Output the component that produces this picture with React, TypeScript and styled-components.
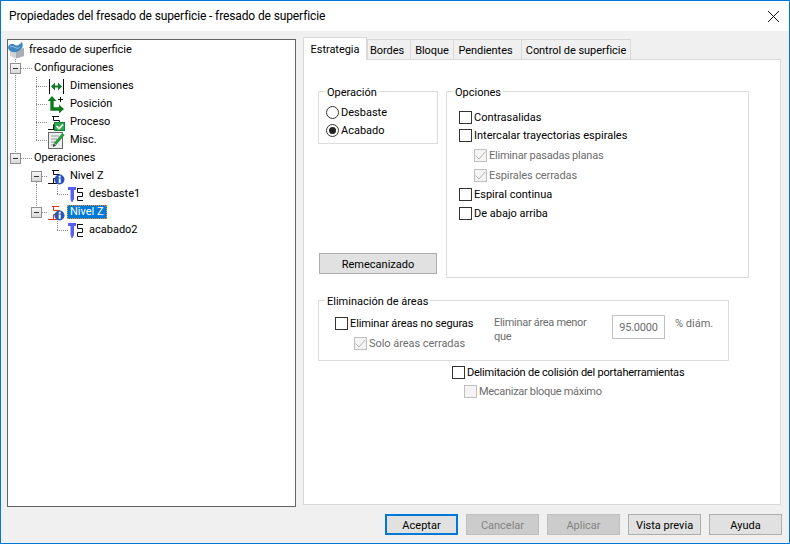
import React from "react";
import styled, { createGlobalStyle } from "styled-components";

const GlobalStyle = createGlobalStyle`
  html, body {
    margin: 0;
    padding: 0;
    background: #f0f0f0;
  }
  * {
    box-sizing: border-box;
  }
`;

const font = `Roboto, "Noto Sans", "Liberation Sans", sans-serif`;

/* ---------- icons ---------- */

function StepShape({ color }: { color: string }) {
  return (
    <path
      d="M4 2.5H11M5.5 2.5V6.5H11.5V10.5H5.5V15.5M0 15.5H9"
      fill="none"
      stroke={color}
      strokeWidth="1"
    />
  );
}

function RootIcon() {
  return (
    <svg width="17" height="17" viewBox="0 0 17 17">
      <path d="M2 6L10 4L16 6V14L8 16.5L2 14Z" fill="#cfd2d6" />
      <path d="M8 16.5V9L16 6V14Z" fill="#a9adb3" />
      <path
        d="M0 5C2 1 5 1 7 3C9 4.5 11 3 14 0C15 3 15 5 13 7C11 9.5 8 10.5 5 10C2 9.5 0 8 0 5Z"
        fill="#3f87bd"
      />
      <path d="M2 5C4 3.5 6 5 8 6C10 6.6 11 6 12 5" fill="none" stroke="#8cc0e4" />
    </svg>
  );
}

function DimensionsIcon() {
  return (
    <svg width="17" height="17" viewBox="0 0 17 17">
      <path d="M1.5 1V16M15.5 1V16" stroke="#111" strokeWidth="1" />
      <path d="M5 8.5H12" stroke="#137a2c" strokeWidth="2" />
      <path d="M3 8.5L7 4.5V12.5ZM14 8.5L10 4.5V12.5Z" fill="#137a2c" />
    </svg>
  );
}

function PositionIcon() {
  return (
    <svg width="17" height="17" viewBox="0 0 17 17">
      <path d="M4 3V13H12" fill="none" stroke="#0f7a1e" strokeWidth="3.4" />
      <path d="M4 0L8.5 5H-0.5ZM16 13L11 8.5V17.5Z" fill="#0f7a1e" />
      <path d="M10 3.5H15M12.5 1V6" stroke="#111" strokeWidth="1" />
    </svg>
  );
}

function ProcessIcon() {
  return (
    <svg width="17" height="17" viewBox="0 0 17 17">
      <StepShape color="#111" />
      <rect x="6.5" y="8.5" width="10" height="8" fill="#2fa84f" stroke="#17803a" />
      <path d="M8.5 12L11 14.5L15 10.5" fill="none" stroke="#fff" strokeWidth="1.6" />
    </svg>
  );
}

function MiscIcon() {
  return (
    <svg width="17" height="17" viewBox="0 0 17 17">
      <rect x="0.5" y="0.5" width="14" height="16" fill="#eceff0" stroke="#6a6a6a" />
      <path d="M3 4H11M3 7H9M3 10H7M3 13H6" stroke="#9a9a9a" />
      <path d="M15.5 2L7 12" stroke="#2c9a3f" strokeWidth="3" />
      <path d="M5 15L5.5 11.5L8 13.5Z" fill="#333" />
    </svg>
  );
}

function LevelIcon({ color }: { color: string }) {
  return (
    <svg width="17" height="17" viewBox="0 0 17 17">
      <StepShape color={color} />
      <circle cx="11.5" cy="11.5" r="5" fill="#2a55b8" />
      <rect x="10.7" y="7.8" width="2" height="1.8" fill="#fff" />
      <rect x="10.7" y="10.4" width="2" height="4.4" fill="#fff" />
    </svg>
  );
}

function ToolIcon() {
  return (
    <svg width="16" height="17" viewBox="0 0 16 17">
      <path d="M0 1H8V4H6V13L4.5 16H3.5L2.5 13V4H0Z" fill="#5860f0" />
      <path
        d="M9 2.5H15M9.5 2.5V6.5H14.5V10.5H9.5V14.5H15"
        fill="none"
        stroke="#111"
        strokeWidth="1"
      />
    </svg>
  );
}

function CheckMark({ color }: { color: string }) {
  return (
    <svg width="11" height="11" viewBox="0 0 11 11">
      <path d="M0.5 5.5L4 9L10.5 1.5" fill="none" stroke={color} strokeWidth="1" />
    </svg>
  );
}

/* ---------- window ---------- */

const Window = styled.div`
  width: 790px;
  height: 544px;
  display: flex;
  flex-direction: column;
  background: #f0f0f0;
  border: 1px solid #0078d7;
  font-family: ${font};
  font-size: 11px;
  color: #000;
  overflow: hidden;
`;

const TitleBar = styled.div`
  height: 30px;
  flex: none;
  display: flex;
  align-items: center;
  justify-content: space-between;
  padding: 0 10px 0 8px;
  background: #fff;
  font-size: 12px;
  letter-spacing: -0.12px;
`;

const CloseButton = styled.span`
  display: flex;
`;

const Main = styled.div`
  flex: 1;
  min-height: 0;
  display: flex;
  gap: 7px;
  padding: 7px 8px 0 6px;
`;

const Footer = styled.div`
  height: 36px;
  flex: none;
  display: flex;
  justify-content: flex-end;
  gap: 8px;
  padding: 7px 7px 0 0;
`;

const Button = styled.div<{ $default?: boolean; $disabled?: boolean }>`
  width: 73px;
  height: 21px;
  display: flex;
  align-items: center;
  justify-content: center;
  padding-top: 1px;
  background: ${(p) => (p.$disabled ? "#cccccc" : "#e1e1e1")};
  color: ${(p) => (p.$disabled ? "#838383" : "#000")};
  border: ${(p) =>
    p.$default ? "2px solid #0078d7" : `1px solid ${p.$disabled ? "#bfbfbf" : "#adadad"}`};
`;

/* ---------- tree ---------- */

const TreePane = styled.div`
  width: 289px;
  height: 468px;
  margin-top: 1px;
  flex: none;
  padding-top: 1px;
  background: #fff;
  border: 1px solid #646464;
  overflow: hidden;
`;

const TreeRow = styled.div`
  height: 18px;
  display: flex;
  align-items: center;
  margin-left: -3px;
`;

type Guide = "none" | "line" | "tee" | "elbow" | "boxDown" | "boxUp" | "boxBoth";

const dotsV = `repeating-linear-gradient(to bottom, #8c8c8c 0 1px, transparent 1px 2px)`;
const dotsH = `repeating-linear-gradient(to right, #8c8c8c 0 1px, transparent 1px 2px)`;

const GuideCell = styled.span<{ $kind: Guide; $wide?: boolean }>`
  position: relative;
  flex: none;
  width: ${(p) => (p.$wide ? 27 : 21)}px;
  height: 18px;

  /* vertical dotted line */
  &::before {
    content: "";
    position: absolute;
    left: 10px;
    width: 1px;
    background-image: ${dotsV};
    display: ${(p) => (p.$kind === "none" ? "none" : "block")};
    top: ${(p) => (p.$kind === "boxDown" ? 9 : 0)}px;
    bottom: ${(p) => (p.$kind === "elbow" || p.$kind === "boxUp" ? 9 : 0)}px;
  }

  /* horizontal dotted line */
  &::after {
    content: "";
    position: absolute;
    left: 10px;
    right: 0;
    top: 9px;
    height: 1px;
    background-image: ${dotsH};
    display: ${(p) => (p.$kind === "none" || p.$kind === "line" ? "none" : "block")};
  }
`;

const Expander = styled.span`
  position: absolute;
  left: 5px;
  top: 4px;
  z-index: 1;
  width: 11px;
  height: 11px;
  background: linear-gradient(#f6f6f6, #d8d8d8);
  border: 1px solid #8f8f8f;
  display: flex;
  align-items: center;
  justify-content: center;

  &::after {
    content: "";
    width: 5px;
    height: 1px;
    background: #333;
  }
`;

const TreeIcon = styled.span<{ $left?: number }>`
  flex: none;
  display: flex;
  margin-left: ${(p) => p.$left ?? 0}px;
`;

const TreeLabel = styled.span<{ $selected?: boolean; $left?: number }>`
  margin-left: ${(p) => p.$left ?? 0}px;
  padding: 0 ${(p) => (p.$selected ? 3 : 2)}px;
  height: 14px;
  line-height: 14px;
  white-space: nowrap;
  ${(p) =>
    p.$selected
      ? `background: #0078d7; color: #fff; outline: 1px dotted #e8912d; outline-offset: -1px;`
      : ""}
`;

function Cell({ kind, wide }: { kind: Guide; wide?: boolean }) {
  return (
    <GuideCell $kind={kind} $wide={wide}>
      {kind.startsWith("box") && <Expander />}
    </GuideCell>
  );
}

/* ---------- tabs and page ---------- */

const TabColumn = styled.div`
  width: 478px;
  height: 467px;
  flex: none;
  display: flex;
  flex-direction: column;
`;

const TabStrip = styled.div`
  height: 22px;
  flex: none;
  display: flex;
  align-items: flex-end;
  position: relative;
  z-index: 1;
  margin-bottom: -1px;
`;

const Tab = styled.div<{ $active?: boolean; $w: number; $nudge?: number }>`
  width: ${(p) => p.$w}px;
  height: ${(p) => (p.$active ? 23 : 21)}px;
  margin-left: ${(p) => (p.$active ? 0 : -1)}px;
  display: flex;
  align-items: center;
  justify-content: center;
  padding-top: ${(p) => (p.$active ? 0 : 2)}px;
  padding-right: ${(p) => p.$nudge ?? 0}px;
  white-space: nowrap;
  letter-spacing: -0.05px;
  background: ${(p) => (p.$active ? "#fff" : "#f0f0f0")};
  border: 1px solid #d9d9d9;
  border-bottom: ${(p) => (p.$active ? "none" : "1px solid #d9d9d9")};
  ${(p) => (p.$active ? "position: relative; z-index: 1; margin-right: 1px; margin-top: -2px;" : "")}
`;

const Page = styled.div`
  flex: 1;
  padding: 31px 0 0 14px;
  background: #fff;
  border: 1px solid #d9d9d9;
`;

const TopRow = styled.div`
  display: flex;
  gap: 8px;
  height: 187px;
`;

const LeftColumn = styled.div`
  width: 120px;
  display: flex;
  flex-direction: column;
  justify-content: space-between;
  padding-bottom: 4px;
`;

const Group = styled.div<{ $w: number; $h: number; $pad: string }>`
  position: relative;
  width: ${(p) => p.$w}px;
  height: ${(p) => p.$h}px;
  padding: ${(p) => p.$pad};
  border: 1px solid #dcdcdc;
`;

const Legend = styled.span`
  position: absolute;
  left: 6px;
  top: -6px;
  height: 14px;
  line-height: 14px;
  padding: 0 2px;
  background: #fff;
`;

const PageButton = styled(Button)`
  width: 118px;
  margin-left: 1px;
`;

const OptionRow = styled.div<{ $indent?: number; $top?: number }>`
  height: 18px;
  display: flex;
  align-items: center;
  gap: 2px;
  margin-left: ${(p) => p.$indent ?? 0}px;
  margin-top: ${(p) => p.$top ?? 0}px;
`;

const Label = styled.span<{ $muted?: boolean; $spacing?: number }>`
  margin-top: 1px;
  white-space: nowrap;
  letter-spacing: ${(p) => p.$spacing ?? 0}px;
  color: ${(p) => (p.$muted ? "#6d6d6d" : "#000")};
`;

const Box = styled.span<{ $muted?: boolean }>`
  flex: none;
  width: 13px;
  height: 13px;
  display: flex;
  align-items: center;
  justify-content: center;
  background: ${(p) => (p.$muted ? "#f4f4f4" : "#fff")};
  border: 1px solid ${(p) => (p.$muted ? "#c0c0c0" : "#333")};
`;

const Radio = styled.span<{ $on?: boolean }>`
  flex: none;
  width: 13px;
  height: 13px;
  border-radius: 50%;
  border: 1px solid #333;
  background: #fff;
  display: flex;
  align-items: center;
  justify-content: center;

  &::after {
    content: "";
    display: ${(p) => (p.$on ? "block" : "none")};
    width: 7px;
    height: 7px;
    border-radius: 50%;
    background: #222;
  }
`;

const AreaGroup = styled(Group)`
  margin-top: 22px;
  display: flex;
`;

const AreaChecks = styled.div`
  width: 159px;
  flex: none;
`;

const AreaNote = styled.div`
  width: 118px;
  flex: none;
  padding-top: 2px;
  line-height: 14px;
  letter-spacing: -0.3px;
  color: #6d6d6d;
`;

const NumberField = styled.div`
  width: 53px;
  height: 24px;
  flex: none;
  margin-top: 1px;
  display: flex;
  align-items: center;
  justify-content: center;
  padding-top: 1px;
  letter-spacing: -0.2px;
  border: 1px solid #bfbfbf;
  color: #6d6d6d;
`;

const Unit = styled.span`
  margin: 3px 0 0 10px;
  color: #6d6d6d;
  white-space: nowrap;
`;

const BottomChecks = styled.div`
  margin: 2px 0 0 134px;
`;

/* ---------- small parts ---------- */

function Check({
  label,
  muted,
  checked,
  indent,
  top,
  spacing,
}: {
  label: string;
  muted?: boolean;
  checked?: boolean;
  indent?: number;
  top?: number;
  spacing?: number;
}) {
  return (
    <OptionRow $indent={indent} $top={top}>
      <Box $muted={muted}>{checked && <CheckMark color="#b5b5b5" />}</Box>
      <Label $muted={muted} $spacing={spacing}>
        {label}
      </Label>
    </OptionRow>
  );
}

const tabs = [
  { label: "Estrategia", w: 64, active: true },
  { label: "Bordes", w: 44, nudge: 4 },
  { label: "Bloque", w: 44 },
  { label: "Pendientes", w: 69, nudge: 4 },
  { label: "Control de superficie", w: 110 },
];

export default function App() {
  return (
    <>
      <GlobalStyle />
      <Window>
        <TitleBar>
          <span>Propiedades del fresado de superficie - fresado de superficie</span>
          <CloseButton>
            <svg width="11" height="11" viewBox="0 0 11 11">
              <path d="M0 0L11 11M11 0L0 11" stroke="#111" strokeWidth="1" />
            </svg>
          </CloseButton>
        </TitleBar>
        <Main>
          <TreePane>
            <TreeRow>
              <TreeIcon $left={3}>
                <RootIcon />
              </TreeIcon>
              <TreeLabel $left={2}>fresado de superficie</TreeLabel>
            </TreeRow>
            <TreeRow>
              <Cell kind="boxBoth" wide />
              <TreeLabel>Configuraciones</TreeLabel>
            </TreeRow>
            {[
              { label: "Dimensiones", icon: <DimensionsIcon />, kind: "tee" as Guide },
              { label: "Posición", icon: <PositionIcon />, kind: "tee" as Guide },
              { label: "Proceso", icon: <ProcessIcon />, kind: "tee" as Guide },
              { label: "Misc.", icon: <MiscIcon />, kind: "elbow" as Guide },
            ].map((item) => (
              <TreeRow key={item.label}>
                <Cell kind="line" />
                <Cell kind={item.kind} />
                <TreeIcon $left={1}>{item.icon}</TreeIcon>
                <TreeLabel $left={3}>{item.label}</TreeLabel>
              </TreeRow>
            ))}
            <TreeRow>
              <Cell kind="boxUp" wide />
              <TreeLabel>Operaciones</TreeLabel>
            </TreeRow>
            <TreeRow>
              <Cell kind="none" />
              <Cell kind="boxDown" />
              <TreeIcon $left={1}>
                <LevelIcon color="#111" />
              </TreeIcon>
              <TreeLabel $left={3}>Nivel Z</TreeLabel>
            </TreeRow>
            <TreeRow>
              <Cell kind="none" />
              <Cell kind="line" />
              <Cell kind="elbow" />
              <TreeIcon>
                <ToolIcon />
              </TreeIcon>
              <TreeLabel $left={3}>desbaste1</TreeLabel>
            </TreeRow>
            <TreeRow>
              <Cell kind="none" />
              <Cell kind="boxUp" />
              <TreeIcon $left={1}>
                <LevelIcon color="#e8301c" />
              </TreeIcon>
              <TreeLabel $selected $left={2}>
                Nivel Z
              </TreeLabel>
            </TreeRow>
            <TreeRow>
              <Cell kind="none" />
              <Cell kind="none" />
              <Cell kind="elbow" />
              <TreeIcon>
                <ToolIcon />
              </TreeIcon>
              <TreeLabel $left={3}>acabado2</TreeLabel>
            </TreeRow>
          </TreePane>

          <TabColumn>
            <TabStrip>
              {tabs.map((t) => (
                <Tab key={t.label} $active={t.active} $w={t.w} $nudge={t.nudge}>
                  {t.label}
                </Tab>
              ))}
            </TabStrip>
            <Page>
              <TopRow>
                <LeftColumn>
                  <Group $w={120} $h={53} $pad="11px 0 0 7px">
                    <Legend>Operación</Legend>
                    <OptionRow>
                      <Radio />
                      <Label>Desbaste</Label>
                    </OptionRow>
                    <OptionRow>
                      <Radio $on />
                      <Label>Acabado</Label>
                    </OptionRow>
                  </Group>
                  <PageButton>Remecanizado</PageButton>
                </LeftColumn>
                <Group $w={303} $h={187} $pad="16px 0 0 12px">
                  <Legend>Opciones</Legend>
                  <Check label="Contrasalidas" />
                  <Check label="Intercalar trayectorias espirales" />
                  <Check label="Eliminar pasadas planas" muted checked indent={15} top={2} spacing={-0.22} />
                  <Check label="Espirales cerradas" muted checked indent={15} top={2} spacing={-0.1} />
                  <Check label="Espiral continua" top={1} />
                  <Check label="De abajo arriba" top={1} />
                </Group>
              </TopRow>

              <AreaGroup $w={411} $h={61} $pad="13px 0 0 16px">
                <Legend>Eliminación de áreas</Legend>
                <AreaChecks>
                  <Check label="Eliminar áreas no seguras" spacing={-0.12} />
                  <Check label="Solo áreas cerradas" muted checked indent={19} top={2} spacing={-0.05} />
                </AreaChecks>
                <AreaNote>
                  Eliminar área menor
                  <br />
                  que
                </AreaNote>
                <NumberField>95.0000</NumberField>
                <Unit>% diám.</Unit>
              </AreaGroup>

              <BottomChecks>
                <Check label="Delimitación de colisión del portaherramientas" spacing={-0.22} />
                <Check label="Mecanizar bloque máximo" muted indent={12} top={1} spacing={-0.3} />
              </BottomChecks>
            </Page>
          </TabColumn>
        </Main>
        <Footer>
          <Button $default>Aceptar</Button>
          <Button $disabled>Cancelar</Button>
          <Button $disabled>Aplicar</Button>
          <Button>Vista previa</Button>
          <Button>Ayuda</Button>
        </Footer>
      </Window>
    </>
  );
}
